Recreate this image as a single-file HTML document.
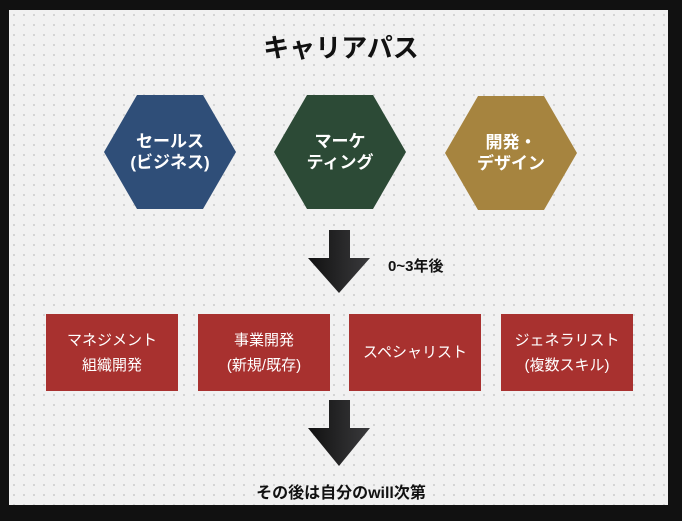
<!DOCTYPE html>
<html><head><meta charset="utf-8"><style>
body{margin:0;width:682px;height:521px;background:#111;position:relative;overflow:hidden;font-family:"Liberation Sans","Noto Sans CJK JP",sans-serif}
.bg{position:absolute;left:9px;top:10px;width:659px;height:495px;background-color:#f1f1f1;background-image:radial-gradient(circle,#c4c4c4 0.7px,transparent 1.1px);background-size:10px 10px}
.t{position:absolute;white-space:nowrap;text-align:center}
.hx{position:absolute;width:132px;height:114px;clip-path:polygon(25% 0,75% 0,100% 50%,75% 100%,25% 100%,0 50%);color:#fff;font-weight:bold;font-size:17px;line-height:21px;display:flex;align-items:center;justify-content:center;text-align:center}
.bx{position:absolute;top:314px;width:132px;height:77px;background:#a8312f;color:#fff;font-size:15px;line-height:25px;display:flex;align-items:center;justify-content:center;text-align:center}
</style></head><body>
<div class="bg"></div>
<div class="t" style="left:0;width:682px;top:28px;font-size:26px;font-weight:bold;color:#111">キャリアパス</div>
<div class="hx" style="left:104px;top:95px;background:#2f4e78">セールス<br>(ビジネス)</div>
<div class="hx" style="left:274px;top:95px;background:#2c4a36">マーケ<br>ティング</div>
<div class="hx" style="left:445px;top:96px;background:#a6843f">開発・<br>デザイン</div>
<svg style="position:absolute;left:0;top:0" width="682" height="521"><defs><linearGradient id="g" x1="0" x2="1"><stop offset="0" stop-color="#111"/><stop offset="1" stop-color="#3a3a3c"/></linearGradient></defs>
<polygon points="329,230 350,230 350,258 370,258 339,293 308,258 329,258" fill="url(#g)"/>
<polygon points="329,400 350,400 350,428 370,428 339,466 308,428 329,428" fill="url(#g)"/></svg>
<div class="t" style="left:388px;top:255px;font-size:15px;font-weight:bold;color:#111">0~3年後</div>
<div class="bx" style="left:46px">マネジメント<br>組織開発</div>
<div class="bx" style="left:198px">事業開発<br>(新規/既存)</div>
<div class="bx" style="left:349px">スペシャリスト</div>
<div class="bx" style="left:501px">ジェネラリスト<br>(複数スキル)</div>
<div class="t" style="left:0;width:682px;top:479px;font-size:16px;font-weight:bold;color:#111">その後は自分のwill次第</div>
</body></html>
